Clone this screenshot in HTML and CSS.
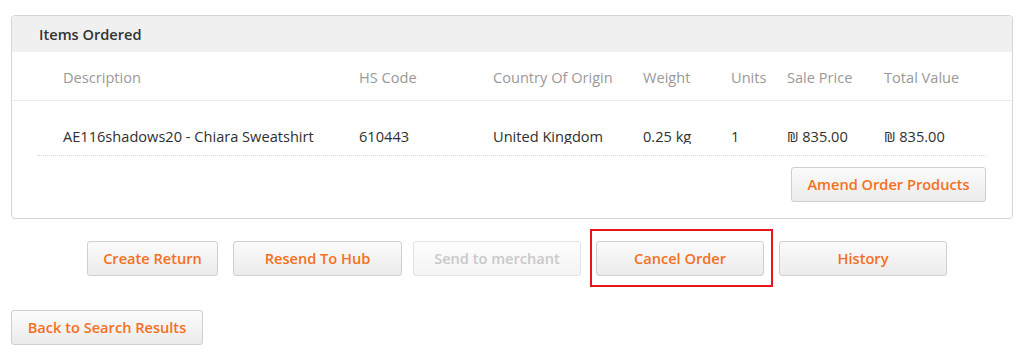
FILE: index.html
```html
<!DOCTYPE html>
<html>
<head>
<meta charset="utf-8">
<link rel="stylesheet" href="styles.css">
</head>
<body>
<section class="panel">
  <div class="panel-head">Items Ordered</div>
  <div class="table">
    <div class="row head-row">
      <div class="c c1">Description</div>
      <div class="c c2">HS Code</div>
      <div class="c c3">Country Of Origin</div>
      <div class="c c4">Weight</div>
      <div class="c c5">Units</div>
      <div class="c c6">Sale Price</div>
      <div class="c c7">Total Value</div>
    </div>
    <div class="row data-row">
      <div class="c c1">AE116shadows20 - Chiara Sweatshirt</div>
      <div class="c c2">610443</div>
      <div class="c c3">United Kingdom</div>
      <div class="c c4">0.25 kg</div>
      <div class="c c5">1</div>
      <div class="c c6">₪ 835.00</div>
      <div class="c c7">₪ 835.00</div>
    </div>
  </div>
  <div class="panel-foot">
    <button class="btn btn-amend">Amend Order Products</button>
  </div>
</section>

<div class="actions">
  <button class="btn w-create">Create Return</button>
  <button class="btn w-resend">Resend To Hub</button>
  <button class="btn w-send" disabled>Send to merchant</button>
  <div class="highlight">
    <button class="btn w-cancel">Cancel Order</button>
  </div>
  <button class="btn w-history">History</button>
</div>

<div class="back">
  <button class="btn w-back">Back to Search Results</button>
</div>
</body>
</html>
```

FILE: styles.css
```css
* { box-sizing: border-box; }

body {
  margin: 0;
  font-family: "Open Sans", "DejaVu Sans", sans-serif;
  font-size: 14.6px;
  color: #333;
  background: #fff;
}

.panel {
  margin: 15px 0 0 11px;
  width: 1002px;
  border: 1px solid #d5d5d5;
  border-radius: 4px;
  overflow: hidden;
}

.panel-head {
  height: 36px;
  padding: 8px 0 0 27px;
  line-height: 20px;
  background: #f0f0f0;
  font-weight: 600;
  color: #333;
}

.row {
  display: grid;
  grid-template-columns: 296px 134px 150px 88px 56px 97px 1fr;
}

.c {
  line-height: 20px;
  white-space: nowrap;
}

.head-row {
  height: 49px;
  padding: 15px 0 0 51px;
  border-bottom: 1px solid #ececec;
  color: #999;
}

.data-row {
  margin: 0 26px;
  height: 55px;
  padding: 25px 0 0 25px;
  border-bottom: 1px dotted #d8d8d8;
}

.data-row .c {
  height: 18px;
  overflow: hidden;
  color: #2f2f2f;
}

.panel-foot {
  display: flex;
  justify-content: flex-end;
  padding: 11px 26px 16px 0;
}

.btn {
  height: 35px;
  padding: 0;
  border: 1px solid #cfcfcf;
  border-radius: 3px;
  background: linear-gradient(#fbfbfb, #ebebeb);
  font-family: "Open Sans", "DejaVu Sans", sans-serif;
  font-size: 14.6px;
  font-weight: 600;
  line-height: 33px;
  color: #f47020;
  text-align: center;
  cursor: pointer;
}

.btn:disabled {
  border-color: #e3e3e3;
  background: linear-gradient(#fdfdfd, #f4f4f4);
  color: #c9c9c9;
}

.btn-amend { width: 195px; }

.actions {
  display: flex;
  align-items: center;
  margin-top: 10px;
  padding-left: 87px;
}

.w-create { width: 131px; margin-right: 15px; }
.w-resend { width: 169px; margin-right: 11px; }
.w-send { width: 168px; margin-right: 9px; }
.w-cancel { width: 168px; }
.w-history { width: 168px; }

.highlight {
  height: 58px;
  padding: 10px 7px 0 4px;
  border: 2px solid #e8141b;
  margin-right: 6px;
}

.back {
  margin-top: 23px;
  padding-left: 11px;
}

.w-back { width: 192px; }
```
